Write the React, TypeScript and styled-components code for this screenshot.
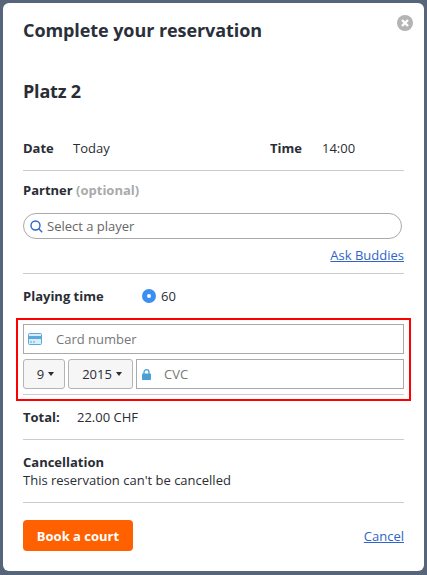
import React from "react";
import styled, { createGlobalStyle } from "styled-components";

const GlobalStyle = createGlobalStyle`
  html, body {
    margin: 0;
    padding: 0;
    height: 100%;
    overflow: hidden;
    background: #56657a;
    font-family: "Open Sans", "Liberation Sans", sans-serif;
    color: #2a2d34;
  }
`;

const Backdrop = styled.div`
  height: 575px;
  padding: 3px;
  box-sizing: border-box;
`;

const Modal = styled.div`
  position: relative;
  width: 421px;
  height: 568px;
  box-sizing: border-box;
  padding: 0 20px;
  background: #fff;
  border-radius: 6px;
`;

const CloseButton = styled.svg`
  position: absolute;
  top: 12px;
  right: 11px;
  width: 16px;
  height: 16px;
`;

const Title = styled.h1`
  margin: 0;
  padding-top: 15px;
  font-size: 18px;
  line-height: 24px;
  font-weight: 700;
  letter-spacing: -0.08px;
  color: #2a303a;
`;

const CourtName = styled.h2`
  margin: 0;
  padding-top: 37px;
  font-size: 18px;
  line-height: 24px;
  font-weight: 700;
  letter-spacing: -0.2px;
`;

const Divider = styled.div`
  height: 1px;
  background: #cccccc;
`;

const Row = styled.div`
  display: flex;
  align-items: center;
  font-size: 13px;
  line-height: 18px;
`;

const DateRow = styled(Row)`
  padding: 36px 0 13px;
`;

const Label = styled.span<{ $width?: number }>`
  font-weight: 700;
  flex: none;
  width: ${(p) => (p.$width ? `${p.$width}px` : "auto")};
`;

const Value = styled.span<{ $width?: number }>`
  flex: none;
  width: ${(p) => (p.$width ? `${p.$width}px` : "auto")};
`;

const PartnerLabel = styled.div`
  padding-top: 10px;
  font-size: 13px;
  line-height: 18px;
  font-weight: 700;
`;

const Optional = styled.span`
  color: #aaaaaa;
`;

const SearchBox = styled.div`
  display: flex;
  align-items: center;
  gap: 4px;
  width: 379px;
  height: 26px;
  margin-top: 14px;
  padding-left: 6px;
  box-sizing: border-box;
  border: 1px solid #aaaaaa;
  border-radius: 13px;
  font-size: 13px;
  color: #666666;
`;

const LinkRow = styled.div`
  display: flex;
  justify-content: flex-end;
  padding: 7px 0 9px;
  font-size: 13px;
  line-height: 18px;
`;

const TextLink = styled.a`
  color: #2f64c8;
  text-decoration: underline;
`;

const TimeRow = styled(Row)`
  padding: 13px 0 13px;
`;

const Radio = styled.span`
  flex: none;
  width: 14px;
  height: 14px;
  margin-right: 5px;
  box-sizing: border-box;
  border: 5px solid #3a8ff0;
  border-radius: 50%;
  background: #fff;
`;

const PaymentBox = styled.div`
  margin: 0 -7px;
  padding: 4px 5px 4px;
  border: 2px solid #ff0000;
`;

const Field = styled.div<{ $grow?: boolean }>`
  display: flex;
  align-items: center;
  height: 30px;
  box-sizing: border-box;
  border: 1px solid #aaaaaa;
  font-size: 13px;
  color: #777777;
  flex: ${(p) => (p.$grow ? "1" : "none")};
`;

const CardIcon = styled.svg`
  flex: none;
  width: 14px;
  height: 12px;
  margin: 0 14px 0 4px;
`;

const LockIcon = styled.svg`
  flex: none;
  width: 9px;
  height: 11px;
  margin: 0 13px 0 5px;
`;

const ExpiryRow = styled.div`
  display: flex;
  gap: 3px;
  margin-top: 5px;
  margin-bottom: 5px;
`;

const Select = styled.div<{ $width: number }>`
  display: flex;
  align-items: center;
  justify-content: center;
  gap: 4px;
  flex: none;
  width: ${(p) => p.$width}px;
  height: 30px;
  padding-left: 3px;
  box-sizing: border-box;
  border: 1px solid #b4b4b4;
  border-radius: 3px;
  background: #f6f6f6;
  font-size: 13px;
  color: #2a2d34;
`;

const Caret = styled.span`
  width: 0;
  height: 0;
  border-left: 3.5px solid transparent;
  border-right: 3.5px solid transparent;
  border-top: 4px solid #2a2d34;
`;

const TotalRow = styled(Row)`
  padding: 7px 0 13px;
`;

const Cancellation = styled.div`
  padding: 13px 0 13px;
  font-size: 13px;
  line-height: 18px;
`;

const Bold = styled.div`
  font-weight: 700;
`;

const Footer = styled.div`
  display: flex;
  align-items: center;
  justify-content: space-between;
  padding-top: 17px;
`;

const BookButton = styled.button`
  width: 110px;
  height: 31px;
  padding: 0;
  border: 0;
  border-radius: 4px;
  background: #ff6000;
  color: #fff;
  font-family: inherit;
  font-size: 13px;
  font-weight: 700;
`;

const CancelLink = styled(TextLink)`
  font-size: 13px;
`;

export default function App() {
  return (
    <>
      <GlobalStyle />
      <Backdrop>
        <Modal>
          <CloseButton viewBox="0 0 16 16">
            <circle cx="8" cy="8" r="8" fill="#b4b4b4" />
            <path d="M5 5l6 6M11 5l-6 6" stroke="#fff" strokeWidth="2.4" />
          </CloseButton>
          <Title>Complete your reservation</Title>
          <CourtName>Platz 2</CourtName>

          <DateRow>
            <Label $width={50}>Date</Label>
            <Value $width={197}>Today</Value>
            <Label $width={52}>Time</Label>
            <Value>14:00</Value>
          </DateRow>
          <Divider />

          <PartnerLabel>
            Partner <Optional>(optional)</Optional>
          </PartnerLabel>
          <SearchBox>
            <svg width="13" height="13" viewBox="0 0 13 13" fill="none" stroke="#2f64c8" strokeWidth="1.4">
              <circle cx="5.5" cy="5.5" r="4.5" />
              <path d="M8.8 8.8l3.4 3.4" />
            </svg>
            Select a player
          </SearchBox>
          <LinkRow>
            <TextLink>Ask Buddies</TextLink>
          </LinkRow>
          <Divider />

          <TimeRow>
            <Label $width={119}>Playing time</Label>
            <Radio />
            <Value>60</Value>
          </TimeRow>

          <PaymentBox>
            <Field>
              <CardIcon viewBox="0 0 14 12">
                <rect x="0.5" y="0.5" width="13" height="11" rx="1" fill="#d9edf8" stroke="#5aa9dc" />
                <rect x="0" y="3" width="14" height="3" fill="#5aa9dc" />
                <path d="M2 9h2M5 9h2" stroke="#5aa9dc" strokeWidth="1" />
              </CardIcon>
              Card number
            </Field>
            <ExpiryRow>
              <Select $width={42}>
                9<Caret />
              </Select>
              <Select $width={65}>
                2015<Caret />
              </Select>
              <Field $grow>
                <LockIcon viewBox="0 0 9 11">
                  <path d="M2 5V3.2a2.5 2.5 0 0 1 5 0V5" fill="none" stroke="#4a9fd4" strokeWidth="1.3" />
                  <rect x="0" y="4.5" width="9" height="6.5" rx="0.8" fill="#4a9fd4" />
                </LockIcon>
                CVC
              </Field>
            </ExpiryRow>
            <Divider />
          </PaymentBox>

          <TotalRow>
            <Label $width={54}>Total:</Label>
            <Value>22.00 CHF</Value>
          </TotalRow>
          <Divider />

          <Cancellation>
            <Bold>Cancellation</Bold>
            This reservation can't be cancelled
          </Cancellation>
          <Divider />

          <Footer>
            <BookButton>Book a court</BookButton>
            <CancelLink>Cancel</CancelLink>
          </Footer>
        </Modal>
      </Backdrop>
    </>
  );
}
